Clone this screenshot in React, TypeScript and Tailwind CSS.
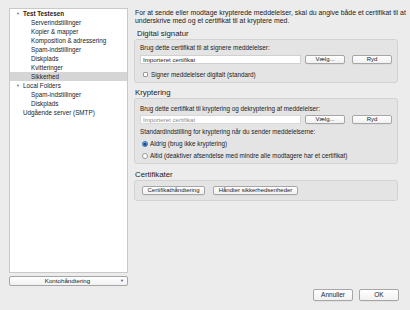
import React from "react";

const Btn = ({ children, w }: { children: React.ReactNode; w: string }) => (
  <div
    className={`${w} h-[9px] flex items-center justify-center rounded-[2px] border border-[#a6a6a6] bg-gradient-to-b from-white to-[#f1f1f1] text-[6px] text-[#222] whitespace-nowrap shadow-[0_0.5px_0_rgba(0,0,0,0.08)]`}
  >
    {children}
  </div>
);

const TreeItem = ({
  children,
  level,
  selected,
  arrow,
  bold,
}: {
  children: React.ReactNode;
  level: number;
  selected?: boolean;
  arrow?: boolean;
  bold?: boolean;
}) => (
  <div
    className={`h-[9px] flex items-center ${selected ? "bg-[#d5d5d5]" : ""}`}
  >
    <div className="w-[13px] flex justify-end pr-[3px]">
      {arrow && <span className="text-[4px] text-[#777] leading-none">▼</span>}
    </div>
    <div
      className={`${level === 1 ? "pl-[8px]" : "pl-0"} text-[6.3px] text-[#222] ${bold ? "font-bold" : ""} whitespace-nowrap`}
    >
      {children}
    </div>
  </div>
);

export default function App() {
  return (
    <div
      className="w-[410px] h-[310px] bg-[#ececec] flex flex-col text-[#222]"
      style={{ fontFamily: '"Liberation Sans", Arial, sans-serif' }}
    >
      <div className="flex pl-[9px] pt-[8px]">
        <div className="w-[119px] flex flex-col">
          <div className="h-[265px] bg-white border border-[#c9c9c9] pt-[0px]">
            <TreeItem level={0} arrow bold>
              Test Testesen
            </TreeItem>
            <TreeItem level={1}>Serverindstillinger</TreeItem>
            <TreeItem level={1}>Kopier &amp; mapper</TreeItem>
            <TreeItem level={1}>Komposition &amp; adressering</TreeItem>
            <TreeItem level={1}>Spam-indstillinger</TreeItem>
            <TreeItem level={1}>Diskplads</TreeItem>
            <TreeItem level={1}>Kvitteringer</TreeItem>
            <TreeItem level={1} selected>
              Sikkerhed
            </TreeItem>
            <TreeItem level={0} arrow>
              Local Folders
            </TreeItem>
            <TreeItem level={1}>Spam-indstillinger</TreeItem>
            <TreeItem level={1}>Diskplads</TreeItem>
            <TreeItem level={0}>Udgående server (SMTP)</TreeItem>
          </div>
          <div className="mt-[3px] h-[10px] flex items-center rounded-[2px] border border-[#a6a6a6] bg-gradient-to-b from-white to-[#f1f1f1] text-[6.2px]">
            <div className="flex-1 text-center pl-[8px]">Kontohåndtering</div>
            <div className="w-[10px] text-[4px] text-[#555] text-center">▼</div>
          </div>
        </div>

        <div className="ml-[6px] w-[264px] flex flex-col">
          <div className="pt-[1px] text-[6.9px] leading-[8px] pl-[1px] whitespace-nowrap">
            For at sende eller modtage krypterede meddelelser, skal du angive både et certifikat til at
            <br />
            underskrive med og et certifikat til at kryptere med.
          </div>

          <div className="mt-[5px] h-[8px] flex items-center pl-[3px] text-[7.8px]">Digital signatur</div>
          <div className="mt-[1px] h-[44px] rounded-[3px] border border-[#d2d2d2] bg-[#e4e4e4] px-[5px] pt-[4px]">
            <div className="h-[8px] flex items-center text-[6.4px]">Brug dette certifikat til at signere meddelelser:</div>
            <div className="mt-[3px] flex items-center">
              <div className="w-[161px] h-[9px] bg-white border border-[#d0d0d0] flex items-center pl-[2px] text-[6.1px]">
                Importeret certifikat
              </div>
              <div className="ml-[4px]">
                <Btn w="w-[40px]">Vælg...</Btn>
              </div>
              <div className="ml-[7px]">
                <Btn w="w-[40px]">Ryd</Btn>
              </div>
            </div>
            <div className="mt-[6px] flex items-center">
              <div className="w-[5px] h-[5px] bg-white border border-[#9a9a9a] rounded-[1px] ml-[3px]" />
              <div className="ml-[3px] text-[6.3px]">Signer meddelelser digitalt (standard)</div>
            </div>
          </div>

          <div className="mt-[6px] h-[8px] flex items-center pl-[1px] text-[7.8px]">Kryptering</div>
          <div className="mt-[1px] h-[66px] rounded-[3px] border border-[#d2d2d2] bg-[#e4e4e4] px-[5px] pt-[6px]">
            <div className="h-[8px] flex items-center text-[6.3px]">Brug dette certifikat til kryptering og dekryptering af meddelelser:</div>
            <div className="mt-[2px] flex items-center">
              <div className="w-[161px] h-[9px] bg-white border border-[#d8d8d8] flex items-center pl-[2px] text-[6.1px] text-[#8a8a8a]">
                Importeret certifikat
              </div>
              <div className="ml-[4px]">
                <Btn w="w-[40px]">Vælg...</Btn>
              </div>
              <div className="ml-[7px]">
                <Btn w="w-[40px]">Ryd</Btn>
              </div>
            </div>
            <div className="mt-[4px] h-[8px] flex items-center text-[6.3px]">
              Standardindstilling for kryptering når du sender meddelelserne:
            </div>
            <div className="mt-[4px] h-[8px] flex items-center">
              <div className="w-[6px] h-[6px] rounded-full bg-gradient-to-b from-[#6aa8e8] to-[#2f74c9] border border-[#3a6fb0] flex items-center justify-center ml-[2px]">
                <div className="w-[2px] h-[2px] rounded-full bg-[#1b2f4a]" />
              </div>
              <div className="ml-[2px] text-[6.3px]">Aldrig (brug ikke kryptering)</div>
            </div>
            <div className="mt-[4px] h-[8px] flex items-center">
              <div className="w-[6px] h-[6px] rounded-full bg-white border border-[#9a9a9a] ml-[2px]" />
              <div className="ml-[2px] text-[6.3px] whitespace-nowrap">
                Altid (deaktiver afsendelse med mindre alle modtagere har et certifikat)
              </div>
            </div>
          </div>

          <div className="mt-[7px] h-[8px] flex items-center pl-[1px] text-[7.8px]">Certifikater</div>
          <div className="mt-[1px] h-[21px] rounded-[3px] border border-[#d2d2d2] bg-[#e4e4e4] px-[7px] flex items-center">
            <Btn w="w-[63px]">Certifikathåndtering</Btn>
            <div className="ml-[8px]">
              <Btn w="w-[85px]">Håndter sikkerhedsenheder</Btn>
            </div>
          </div>
        </div>
      </div>

      <div className="flex justify-end pr-[11px] mt-[3px] gap-[6px]">
        <Btn w="w-[40px] !h-[12px] !text-[6.5px]">Annuller</Btn>
        <Btn w="w-[40px] !h-[12px] !text-[6.5px]">OK</Btn>
      </div>
    </div>
  );
}
